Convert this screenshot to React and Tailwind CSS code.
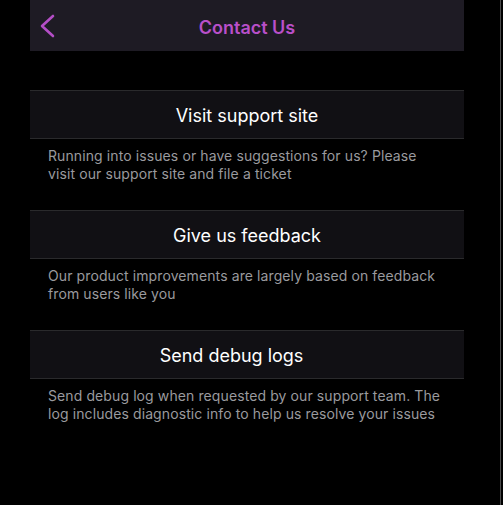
const items = [
  {
    title: "Visit support site",
    text: "Running into issues or have suggestions for us? Please visit our support site and file a ticket",
  },
  {
    title: "Give us feedback",
    text: "Our product improvements are largely based on feedback from users like you",
  },
  {
    title: "Send debug logs",
    text: "Send debug log when requested by our support team. The log includes diagnostic info to help us resolve your issues",
    offset: true,
  },
];

const App = () => {
  return (
    <div
      className="flex h-[505px] w-[503px] bg-black"
      style={{ fontFamily: "Inter, 'Noto Sans', sans-serif" }}
    >
      <div className="ml-[30px] w-[434px]">
        {/* Header */}
        <div className="relative flex h-[51px] items-center justify-center bg-[#1e1b24] pt-[3px]">
          <button className="absolute left-[8px] top-[12px] p-0">
            <svg width="18" height="28" viewBox="0 0 18 28" fill="none">
              <path
                d="M15 4 L4 14 L15 24"
                stroke="#b44ec6"
                strokeWidth="2.6"
                strokeLinecap="round"
                strokeLinejoin="round"
              />
            </svg>
          </button>
          <h1 className="text-[18px] font-semibold text-[#b94fc9]">Contact Us</h1>
        </div>

        <div className="pt-[39px]">
          {items.map((item) => (
            <div key={item.title}>
              <div
                className={`flex h-[49px] items-center justify-center border-y border-[#2a2a2c] bg-[#111014] pt-[2px] ${
                  item.offset ? "pr-[31px]" : ""
                }`}
              >
                <span className="text-[18px] text-white">{item.title}</span>
              </div>
              <p className="pb-[27px] pl-[18px] pr-[20px] pt-[8px] text-[14px] leading-[18px] tracking-[0.1px] text-[#9a9a9e]">
                {item.text}
              </p>
            </div>
          ))}
        </div>
      </div>
      <div className="ml-auto mr-[2px] w-[1px] bg-[#4a4a4a]" />
    </div>
  );
};

export default App;
